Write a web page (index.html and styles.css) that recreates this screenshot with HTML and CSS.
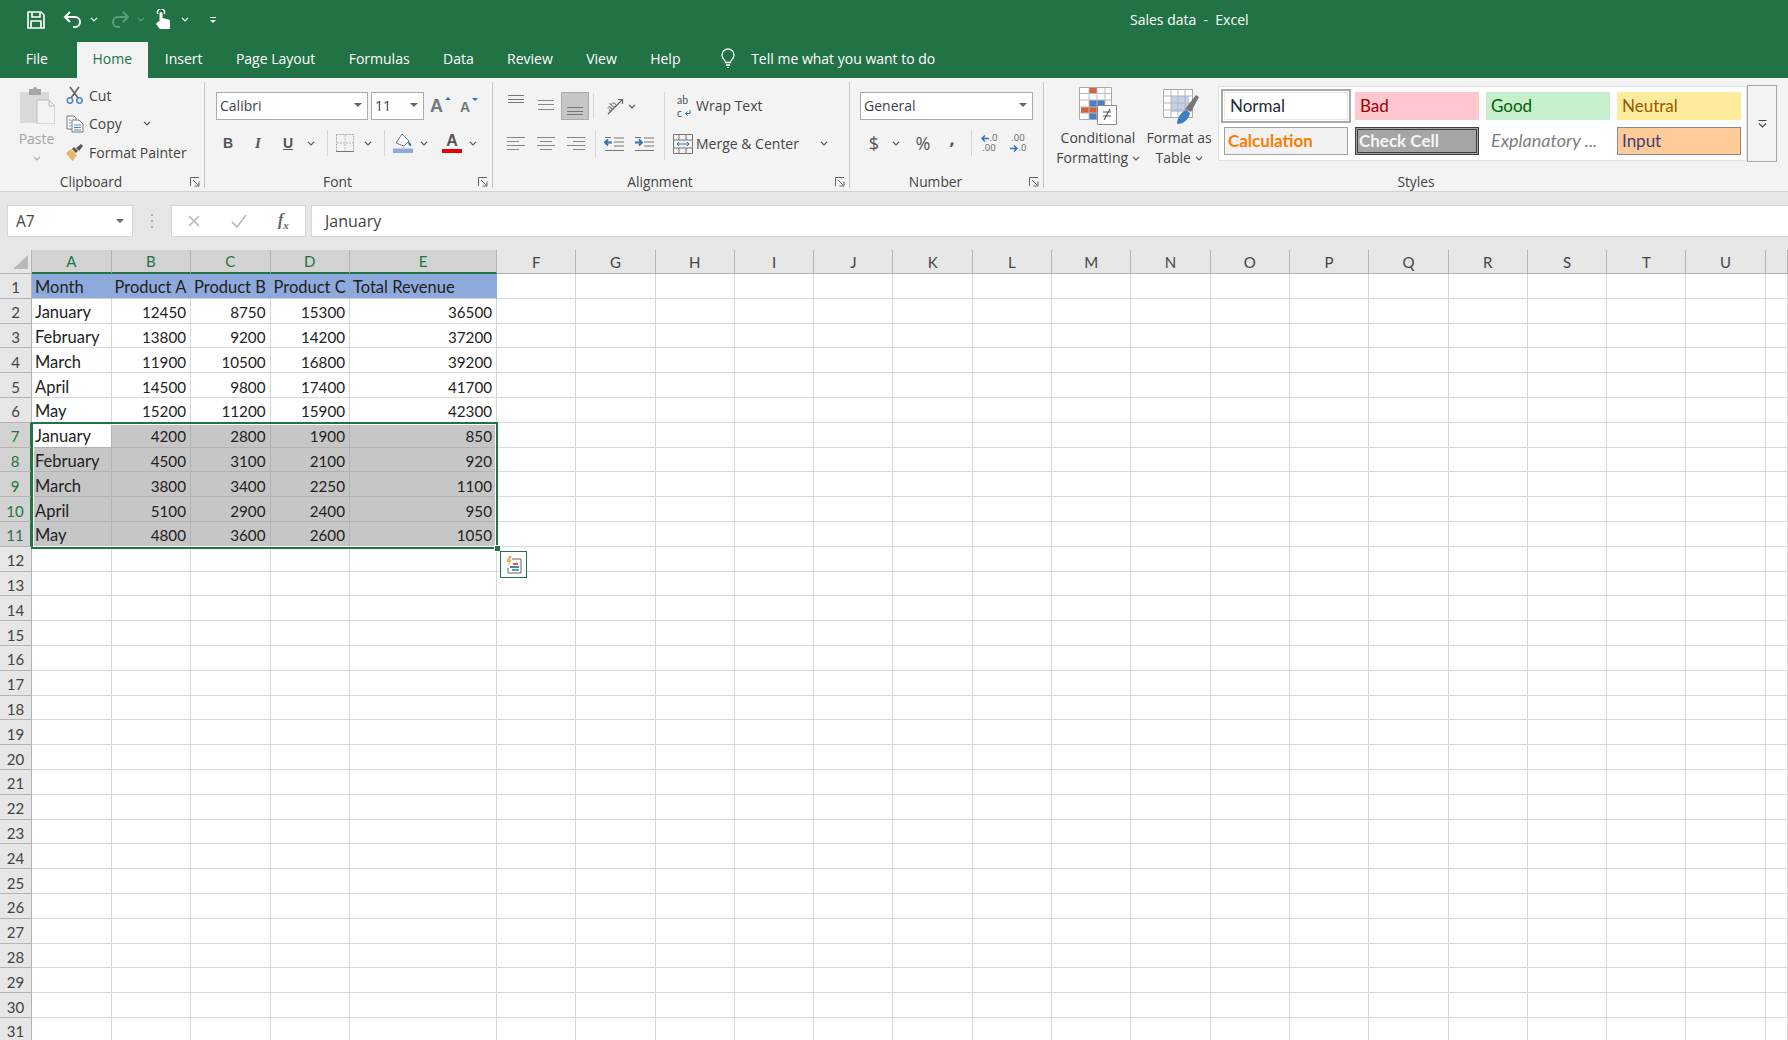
FILE: index.html
```html
<!DOCTYPE html>
<html lang="en">
<head>
    <meta charset="UTF-8">
    <title>Sales data - Excel</title>
    <link rel="stylesheet" href="styles.css">
</head>
<body>

    <svg class="defs" aria-hidden="true">
        <symbol id="chev" viewBox="0 0 8 5"><path d="M1 .8l3 3 3-3" fill="none" stroke="#555" stroke-width="1.2"/></symbol>
        <symbol id="launcher" viewBox="0 0 10 10"><path d="M.5 9V.5H9M3 3l5.5 5.5M4.5 9H9V4.5" fill="none" stroke="#666"/></symbol>
        <symbol id="al-top" viewBox="0 0 18 28"><path d="M1 3.500h16M1 7.500h16M1 10.500h16" stroke="#777" fill="none"/></symbol>
        <symbol id="al-mid" viewBox="0 0 18 28"><path d="M1 8.500h16M1 12.500h16M1 17.500h16" stroke="#888" fill="none"/></symbol>
        <symbol id="al-bot" viewBox="0 0 18 28"><path d="M1 15.500h16M1 19.500h16M1 22.500h16" stroke="#777" fill="none"/></symbol>
        <symbol id="al-left" viewBox="0 0 18 28"><path d="M0 7.500h18M0 11.500h12M0 15.500h18M0 19.500h12" stroke="#888" fill="none"/></symbol>
        <symbol id="al-center" viewBox="0 0 18 28"><path d="M0 7.500h18M3 11.500h12M0 15.500h18M3 19.500h12" stroke="#888" fill="none"/></symbol>
        <symbol id="al-right" viewBox="0 0 18 28"><path d="M0 7.500h18M6 11.500h12M0 15.500h18M6 19.500h12" stroke="#888" fill="none"/></symbol>
    </svg>

    <header class="titlebar">
        <div class="qat">
            <svg class="qat-save" viewBox="0 0 18 18"><path d="M1 1h13l3 3v13H1zM5 1v5h8V1M4 17v-7h10v7" fill="none" stroke="#fff" stroke-width="1.6"/></svg>
            <svg class="qat-undo" viewBox="0 0 20 17"><path d="M7 1L2 6l5 5M2 6h10a5 5 0 0 1 0 10h-2" fill="none" stroke="#fff" stroke-width="2"/></svg>
            <svg class="qat-chev" viewBox="0 0 8 5"><path d="M1 .8l3 3 3-3" fill="none" stroke="#fff" stroke-width="1.2"/></svg>
            <svg class="qat-redo" viewBox="0 0 20 17"><path d="M13 1l5 5-5 5M18 6H8a5 5 0 0 0 0 10h2" fill="none" stroke="#5f9c7c" stroke-width="2"/></svg>
            <svg class="qat-chev dim" viewBox="0 0 8 5"><path d="M1 .8l3 3 3-3" fill="none" stroke="#5f9c7c" stroke-width="1.2"/></svg>
            <svg class="qat-touch" viewBox="0 0 16 21"><path d="M3 5a3.500 3.500 0 1 1 6 0" fill="none" stroke="#fff" stroke-width="1.4"/><path d="M4.500 12V4.500a1.500 1.500 0 0 1 3 0V9l6 1.500c1 .3 1.500 1 1.500 2V20H5l-4-5 1-1.500z" fill="#fff"/></svg>
            <svg class="qat-chev" viewBox="0 0 8 5"><path d="M1 .8l3 3 3-3" fill="none" stroke="#fff" stroke-width="1.2"/></svg>
            <svg class="qat-more" viewBox="0 0 8 8"><path d="M1 1h6v1H1zM1 4h6L4 7z" fill="#fff"/></svg>
        </div>
        <div class="doc-title">Sales data&nbsp; - &nbsp;Excel</div>
    </header>

    <nav class="tabs">
        <span class="tab file">File</span>
        <span class="tab active">Home</span>
        <span class="tab">Insert</span>
        <span class="tab">Page Layout</span>
        <span class="tab">Formulas</span>
        <span class="tab">Data</span>
        <span class="tab">Review</span>
        <span class="tab">View</span>
        <span class="tab">Help</span>
        <svg class="bulb" viewBox="0 0 16 20"><path d="M5.500 14.500c0-2.500-3.500-3.500-3.500-7.500a6 6 0 0 1 12 0c0 4-3.500 5-3.500 7.500zM6 17h4M7 19.300h2" fill="none" stroke="#fff" stroke-width="1.3"/></svg>
        <span class="tell-me">Tell me what you want to do</span>
    </nav>

    <section class="ribbon">

        <div class="group clipboard">
            <div class="group-body clip-body">
                <div class="paste">
                    <svg class="paste-icon" viewBox="0 0 36 37"><path d="M1 5h29v31H1z" fill="#dcd8d8"/><path d="M10 2h4l1-2h2l1 2h4v6H10z" fill="#a8a6a6"/><path d="M18 13h12l6 6v18H18z" fill="#f5f1f5" stroke="#bbb"/><path d="M30 13v6h6" fill="none" stroke="#bbb"/></svg>
                    <span class="paste-label">Paste</span>
                    <svg class="chev" viewBox="0 0 8 5"><path d="M1 .8l3 3 3-3" fill="none" stroke="#aaa" stroke-width="1.2"/></svg>
                </div>
                <div class="clip-list">
                    <div class="clip-row">
                        <svg class="clip-icon" viewBox="0 0 18 18"><path d="M4 1l8 11M13 1L5 12" stroke="#666" stroke-width="1.700" fill="none"/><circle cx="4" cy="14.500" r="2.700" fill="none" stroke="#4a86c5" stroke-width="1.500"/><circle cx="13.500" cy="14.500" r="2.700" fill="none" stroke="#4a86c5" stroke-width="1.500"/></svg>
                        <span>Cut</span>
                    </div>
                    <div class="clip-row">
                        <svg class="clip-icon" viewBox="0 0 18 18"><path d="M1 1h7l2 2v11H1z" fill="#fff" stroke="#777"/><path d="M6 5h7l4 4v8H6z" fill="#fff" stroke="#777"/><path d="M3 5h2M3 8h2M3 11h2M8 10h7M8 12.500h7M8 15h7" stroke="#4a86c5"/></svg>
                        <span>Copy</span>
                        <svg class="chev copy-chev"><use href="#chev"/></svg>
                    </div>
                    <div class="clip-row">
                        <svg class="clip-icon" viewBox="0 0 18 18"><path d="M0 10l5-4 6 6-4 6c-2-1-5-5-7-8z" fill="#e8b868"/><path d="M6 6l2-2 4 4-2 2zM10 5l5-4 2 2-4 5z" fill="#555"/></svg>
                        <span>Format Painter</span>
                    </div>
                </div>
            </div>
            <div class="group-label">Clipboard</div>
            <svg class="launcher"><use href="#launcher"/></svg>
        </div>

        <div class="group font-group">
            <div class="group-body">
                <div class="tool-row">
                    <div class="combo font-name"><span>Calibri</span><i class="caret"></i></div>
                    <div class="combo font-size"><span>11</span><i class="caret"></i></div>
                    <div class="size-btn grow">A<i class="mini-up"></i></div>
                    <div class="size-btn shrink">A<i class="mini-down"></i></div>
                </div>
                <div class="tool-row second">
                    <span class="tool t30 fmt bold">B</span>
                    <span class="tool t30 fmt italic">I</span>
                    <span class="tool t30 fmt under">U</span>
                    <span class="tool t16"><svg class="chev"><use href="#chev"/></svg></span>
                    <i class="sep ml8 mr5"></i>
                    <span class="tool t24">
                        <svg class="icon-18" viewBox="0 0 18 18"><path d="M.5.500h17v17H.5z" fill="none" stroke="#aaa" stroke-dasharray="2 1"/><path d="M9 1v16M1 9h16" stroke="#bbb" stroke-dasharray="2 1"/><path d="M0 17.500h18" stroke="#777"/></svg>
                    </span>
                    <span class="tool t16 ml3"><svg class="chev"><use href="#chev"/></svg></span>
                    <i class="sep ml8 mr6"></i>
                    <span class="tool t24">
                        <svg class="icon-20" viewBox="0 0 20 20"><path d="M9 1l7 7-5 5-8-3z" fill="#fff" stroke="#777"/><path d="M15 8c3 2 4 4 3 5-2 0-3-2-3-5z" fill="#2f75b5"/><path d="M0 15.500h20V20H0z" fill="#8eaadb"/></svg>
                    </span>
                    <span class="tool t16 ml1"><svg class="chev"><use href="#chev"/></svg></span>
                    <span class="tool t24 ml8 color-a">A<i class="red-bar"></i></span>
                    <span class="tool t16 ml1"><svg class="chev"><use href="#chev"/></svg></span>
                </div>
            </div>
            <div class="group-label">Font</div>
            <svg class="launcher"><use href="#launcher"/></svg>
        </div>

        <div class="group align-group">
            <div class="group-body align-body">
                <div class="align-left">
                    <div class="tool-row">
                        <span class="tool t30"><svg class="icon-al"><use href="#al-top"/></svg></span>
                        <span class="tool t30"><svg class="icon-al"><use href="#al-mid"/></svg></span>
                        <span class="tool t30 pressed"><svg class="icon-al"><use href="#al-bot"/></svg></span>
                        <i class="sep ml4 mr10"></i>
                        <span class="tool t20">
                            <svg class="icon-20" viewBox="0 0 20 20"><text class="orient-text" x="2" y="13" transform="rotate(-45 8 10)">ab</text><path d="M4 18L18 4M14 3.500h4.500V8" fill="none" stroke="#666" stroke-width="1.200"/></svg>
                        </span>
                        <span class="tool t16"><svg class="chev"><use href="#chev"/></svg></span>
                    </div>
                    <div class="tool-row second">
                        <span class="tool t30"><svg class="icon-al"><use href="#al-left"/></svg></span>
                        <span class="tool t30"><svg class="icon-al"><use href="#al-center"/></svg></span>
                        <span class="tool t30"><svg class="icon-al"><use href="#al-right"/></svg></span>
                        <i class="sep ml4 mr3"></i>
                        <span class="tool t30">
                            <svg class="icon-20" viewBox="0 0 20 16"><path d="M10 2h10M10 6h10M10 10h10M1 14.500h19M1 1.500h6" stroke="#777" fill="none"/><path d="M8 6.500H1M4 3.500l-3 3 3 3" stroke="#2f75b5" stroke-width="1.800" fill="none"/></svg>
                        </span>
                        <span class="tool t30">
                            <svg class="icon-20" viewBox="0 0 20 16"><path d="M10 2h10M10 6h10M10 10h10M1 14.500h19M1 1.500h6" stroke="#777" fill="none"/><path d="M1 6.500h7M5 3.500l3 3-3 3" stroke="#2f75b5" stroke-width="1.800" fill="none"/></svg>
                        </span>
                    </div>
                </div>
                <div class="align-right">
                    <div class="wrap-row">
                        <svg class="wrap-icon" viewBox="0 0 20 28"><text class="wrap-text" x="1" y="12">ab</text><text class="wrap-text" x="1" y="25">c</text><path d="M14 18v3.500H9.500M11.500 19.500l-2 2 2 2" fill="none" stroke="#2f75b5"/></svg>
                        <span>Wrap Text</span>
                    </div>
                    <div class="merge-row">
                        <svg class="merge-icon" viewBox="0 0 20 20"><path d="M.5.500h19v19H.5zM1 6h18M1 14h18M6 1v5M13 1v5M6 14v5M13 14v5" fill="none" stroke="#777"/><path d="M4 10h12M6 8l-2 2 2 2M14 8l2 2-2 2" fill="none" stroke="#2f75b5"/></svg>
                        <span>Merge &amp; Center</span>
                        <svg class="chev merge-chev"><use href="#chev"/></svg>
                    </div>
                </div>
            </div>
            <div class="group-label">Alignment</div>
            <svg class="launcher"><use href="#launcher"/></svg>
        </div>

        <div class="group number-group">
            <div class="group-body">
                <div class="tool-row">
                    <div class="combo number-format"><span>General</span><i class="caret"></i></div>
                </div>
                <div class="tool-row second">
                    <span class="tool t28 num-sign">$</span>
                    <span class="tool t16"><svg class="chev"><use href="#chev"/></svg></span>
                    <span class="tool t28 ml5 num-sign">%</span>
                    <span class="tool t28 ml1 num-sign comma">,</span>
                    <i class="sep ml5 mr7"></i>
                    <span class="tool t20 decimal">
                        <span class="dec-line"><svg class="dec-arrow" viewBox="0 0 8 7"><path d="M8 3.500H1M4 .5l-3 3 3 3" fill="none" stroke="#2f75b5" stroke-width="1.500"/></svg>.0</span>
                        <span class="dec-line">.00</span>
                    </span>
                    <span class="tool t20 decimal ml9">
                        <span class="dec-line">.00</span>
                        <span class="dec-line"><svg class="dec-arrow" viewBox="0 0 8 7"><path d="M0 3.500h7M4 .5l3 3-3 3" fill="none" stroke="#2f75b5" stroke-width="1.500"/></svg>.0</span>
                    </span>
                </div>
            </div>
            <div class="group-label">Number</div>
            <svg class="launcher"><use href="#launcher"/></svg>
        </div>

        <div class="group styles-group">
            <div class="group-body styles-body">
                <div class="big-btn cond">
                    <svg class="big-icon" viewBox="0 0 38 38"><path d="M.5.500h32v32H.5z" fill="#fff" stroke="#aaa"/><path d="M10 1h8v6h-8z" fill="#d9603b"/><path d="M10 13h16v7H10z" fill="#4a7fc1"/><path d="M2 20h16v6H2z" fill="#d9603b"/><path d="M10 26h8v6h-8z" fill="#4a7fc1"/><path d="M10 1v31M18 1v31M26 1v31M1 6.500h31M1 13h31M1 20h31M1 26h31" stroke="#bbb" fill="none"/><path d="M18.500 18.500h19v19h-19z" fill="#fff" stroke="#888"/><path d="M24 25h8M24 29h8M31 22l-6 11" stroke="#555" fill="none" stroke-width="1.200"/></svg>
                    <span class="big-text">Conditional<br>Formatting <svg class="chev"><use href="#chev"/></svg></span>
                </div>
                <div class="big-btn fmt-table">
                    <svg class="big-icon table-icon" viewBox="0 0 36 36"><path d="M.5.500h29v28H.5z" fill="#fff" stroke="#aaa"/><path d="M8 7h18v16H8z" fill="#bfd0e8"/><path d="M8 1v28M15 1v28M22 1v28M1 7h28M1 14h28M1 21h28" stroke="#b5b5b5" fill="none"/><path d="M22 20L33 6l3 2-8 15z" fill="#777"/><path d="M14 35c0-6 4-12 9-14l4 3c-1 6-6 11-13 11z" fill="#3f7cbf"/></svg>
                    <span class="big-text">Format as<br>Table <svg class="chev"><use href="#chev"/></svg></span>
                </div>
                <div class="gallery">
                    <div class="style-cell s-normal">Normal</div>
                    <div class="style-cell s-bad">Bad</div>
                    <div class="style-cell s-good">Good</div>
                    <div class="style-cell s-neutral">Neutral</div>
                    <div class="style-cell s-calc">Calculation</div>
                    <div class="style-cell s-check">Check Cell</div>
                    <div class="style-cell s-expl">Explanatory ...</div>
                    <div class="style-cell s-input">Input</div>
                </div>
                <div class="gallery-more">
                    <svg viewBox="0 0 9 8"><path d="M.5.500h8" stroke="#444" fill="none"/><path d="M1 3.500l3.500 3.500L8 3.500" stroke="#444" stroke-width="1.200" fill="none"/></svg>
                </div>
            </div>
            <div class="group-label">Styles</div>
        </div>
    </section>

    <section class="formula-bar">
        <div class="name-box"><span>A7</span><i class="caret"></i></div>
        <div class="fb-grip"></div>
        <div class="fb-buttons">
            <svg class="fb-icon" viewBox="0 0 14 14"><path d="M2 2l10 10M12 2L2 12" stroke="#b5b5b5" stroke-width="1.500" fill="none"/></svg>
            <svg class="fb-icon" viewBox="0 0 16 14"><path d="M1 8l5 5L15 1" stroke="#b5b5b5" stroke-width="1.500" fill="none"/></svg>
            <span class="fx">f<sub>x</sub></span>
        </div>
        <div class="fb-input">January</div>
    </section>

    <main class="sheet">
        <div class="grid" id="grid"></div>
        <div class="selection"><i class="fill-handle"></i></div>
        <div class="quick-analysis">
            <svg viewBox="0 0 18 18"><path d="M4 0L1 6h3L2 11l6-7H5l2-4z" fill="#edb35c"/><path d="M7 3h9v14H3v-5" fill="#fff" stroke="#666"/><path d="M8 7h5v2H8z" fill="#d9603b"/><path d="M5 10h9v2H5z" fill="#4a7fc1"/><path d="M7 13h7v2H7z" fill="#55a985"/></svg>
        </div>
    </main>

    <script src="script.js"></script>

</body>
</html>
```

FILE: styles.css
```css
* {
    margin: 0;
    padding: 0;
    box-sizing: border-box;
}
html, body {
    height: 100%;
    overflow: hidden;
}
body {
    font-family: "Open Sans", "Noto Sans", sans-serif;
    font-size: 14px;
    color: #444;
    background: #fff;
}
.defs {
    position: absolute;
    width: 0;
    height: 0;
}
i {
    display: block;
}

/* title bar and tabs */
.titlebar {
    display: flex;
    align-items: center;
    height: 41px;
    padding: 0 0 2px 27px;
    background: #217346;
    color: #fff;
}
.qat {
    display: flex;
    align-items: center;
    width: 1103px;
}
.qat-save { width: 18px; height: 18px; margin-right: 18px; }
.qat-undo { width: 20px; height: 17px; margin-right: 7px; }
.qat-redo { width: 20px; height: 17px; margin: 0 7px 0 12px; }
.qat-chev { width: 8px; height: 5px; }
.qat-touch { width: 16px; height: 21px; margin: 0 10px 0 10px; }
.qat-more { width: 8px; height: 8px; margin-left: 20px; }
.doc-title {
    font-size: 14px;
}
.tabs {
    display: flex;
    align-items: center;
    height: 37px;
    background: #217346;
    color: #fff;
    padding-left: 9px;
}
.tab {
    display: flex;
    align-items: center;
    height: 36px;
    padding: 0 16.700px 3px;
    margin-bottom: -1px;
}
.tab.file {
    margin-right: 12px;
}
.tab.active {
    background: #f3f3f3;
    color: #217346;
    padding: 0 16px 3px;
}
.bulb {
    width: 16px;
    height: 20px;
    margin: 0 15px 3px 23px;
}
.tell-me {
    padding-bottom: 3px;
}

/* ribbon */
.ribbon {
    display: flex;
    height: 114px;
    background: #f3f3f3;
    border-bottom: 1px solid #d2d2d2;
}
.group {
    position: relative;
    display: flex;
    flex-direction: column;
    height: 106px;
    margin-top: 4px;
    border-right: 1px solid #c6c6c6;
}
.group-body {
    flex: 1;
    padding-top: 10px;
}
.group-label {
    height: 12px;
    padding-right: 22px;
    line-height: 12px;
    text-align: center;
    font-size: 13.800px;
    color: #444;
}
.styles-group .group-label {
    padding-right: 0;
}
.launcher {
    position: absolute;
    right: 4px;
    bottom: 1px;
    width: 10px;
    height: 10px;
}
.clipboard { width: 205px; }
.font-group { width: 288px; }
.font-group .group-body { padding-left: 8px; }
.align-group { width: 357px; }
.align-group .group-body { padding-left: 8px; }
.number-group { width: 194px; }
.number-group .group-body { padding-left: 10px; }
.styles-group { flex: 1; border-right: 0; }

.tool-row {
    display: flex;
    align-items: center;
    height: 28px;
}
.tool-row.second {
    margin-top: 10px;
}
.font-group .tool-row.second,
.number-group .tool-row.second {
    margin-top: 9px;
}
.tool {
    display: flex;
    align-items: center;
    justify-content: center;
    height: 28px;
    flex: none;
    color: #555;
}
.t16 { width: 16px; }
.t20 { width: 20px; }
.t24 { width: 24px; }
.t28 { width: 28px; }
.t30 { width: 30px; }
.ml1 { margin-left: 1px; }
.ml3 { margin-left: 3px; }
.ml4 { margin-left: 4px; }
.ml5 { margin-left: 5px; }
.ml8 { margin-left: 8px; }
.ml9 { margin-left: 9px; }
.mr3 { margin-right: 3px; }
.mr5 { margin-right: 5px; }
.mr6 { margin-right: 6px; }
.mr7 { margin-right: 7px; }
.mr10 { margin-right: 10px; }
.sep {
    width: 1px;
    height: 26px;
    background: #d6d6d6;
    flex: none;
}
.chev {
    width: 8px;
    height: 5px;
}
.icon-18 { width: 18px; height: 18px; }
.icon-20 { width: 20px; height: 20px; }
.icon-al { width: 18px; height: 28px; }
.caret {
    width: 0;
    height: 0;
    border-left: 4px solid transparent;
    border-right: 4px solid transparent;
    border-top: 4px solid #666;
}
.combo {
    display: flex;
    align-items: center;
    justify-content: space-between;
    height: 28px;
    background: #fff;
    border: 1px solid #ababab;
    padding: 0 5px 2px 3px;
    color: #3a3f4a;
}

/* clipboard */
.clip-body {
    display: flex;
    padding-top: 0;
}
.paste {
    display: flex;
    flex-direction: column;
    align-items: center;
    width: 66px;
    padding: 5px 0 0 7px;
    color: #a4a4a4;
}
.paste-icon { width: 36px; height: 37px; }
.paste-label { margin-top: 5px; line-height: 20px; }
.paste .chev { margin-top: 7px; }
.clip-list {
    margin-top: -1px;
}
.clip-row {
    display: flex;
    align-items: center;
    height: 28.5px;
}
.clip-icon {
    width: 18px;
    height: 18px;
    margin-right: 5px;
}
.copy-chev {
    margin-left: 21px;
}

/* font */
.font-name {
    width: 152px;
    margin-left: 3px;
}
.font-size {
    width: 53px;
    margin-left: 3px;
}
.size-btn {
    position: relative;
    flex: none;
    font-family: "Liberation Sans", sans-serif;
    color: #777;
    font-weight: bold;
}
.size-btn.grow { font-size: 18px; margin-left: 6px; width: 21px; }
.size-btn.shrink { font-size: 14px; margin-left: 9px; width: 18px; padding-top: 2px; }
.mini-up, .mini-down {
    position: absolute;
    top: 1px;
    right: 0;
    width: 0;
    height: 0;
    border-left: 3px solid transparent;
    border-right: 3px solid transparent;
}
.mini-up { border-bottom: 3px solid #2f75b5; }
.mini-down { border-top: 3px solid #2f75b5; }
.fmt {
    font-family: "Liberation Sans", sans-serif;
    font-size: 14px;
    font-weight: bold;
}
.fmt.italic { font-family: "Liberation Serif", serif; font-style: italic; font-size: 15px; }
.fmt.under { text-decoration: underline; }
.color-a {
    position: relative;
    font-family: "Liberation Sans", sans-serif;
    font-size: 16px;
    font-weight: bold;
    padding-bottom: 4px;
}
.red-bar {
    position: absolute;
    left: 2px;
    right: 2px;
    bottom: 4px;
    height: 4px;
    background: #e60000;
}

/* alignment */
.align-body {
    display: flex;
}
.align-left {
    width: 163px;
}
.pressed {
    background: #c6c6c6;
    border: 1px solid #ababab;
    width: 28px;
}
.orient-text {
    font-size: 9px;
    fill: #666;
}
.align-right {
    height: 68px;
    border-left: 1px solid #d6d6d6;
    padding-left: 8px;
}
.wrap-row, .merge-row {
    display: flex;
    align-items: center;
    height: 28px;
    padding-bottom: 2px;
}
.merge-row {
    margin-top: 10px;
}
.wrap-icon {
    width: 20px;
    height: 28px;
    margin: 2px 0 0 3px;
    flex: none;
}
.wrap-text {
    font-family: "Lato", sans-serif;
    font-size: 10.500px;
    fill: #555;
}
.merge-icon {
    width: 20px;
    height: 20px;
    margin: 2px 3px 0 0;
}
.merge-chev {
    margin-left: 21px;
}

/* number */
.number-format {
    width: 173px;
}
.num-sign {
    font-size: 18px;
}
.comma {
    font-weight: bold;
    padding-bottom: 10px;
}
.decimal {
    flex-direction: column;
    font-size: 9.500px;
    line-height: 10px;
    color: #666;
}
.dec-line {
    display: flex;
    align-items: center;
    white-space: nowrap;
}
.dec-arrow {
    width: 8px;
    height: 7px;
    margin-right: 1px;
}

/* styles */
.styles-body {
    display: flex;
    padding: 0;
}
.big-btn {
    display: flex;
    flex-direction: column;
    align-items: center;
    padding-top: 5px;
}
.big-btn.cond { width: 96px; padding-left: 12px; }
.big-btn.fmt-table { width: 78px; }
.big-icon {
    width: 38px;
    height: 38px;
}
.table-icon {
    width: 36px;
    height: 36px;
    margin: 2px 0 0 4px;
}
.big-text {
    margin-top: 3px;
    line-height: 20px;
    text-align: center;
    white-space: nowrap;
}
.big-text .chev {
    vertical-align: 2px;
}
.gallery {
    display: grid;
    grid-template-columns: repeat(4, 124px);
    grid-template-rows: 28px 28px;
    gap: 7px;
    width: 529px;
    height: 75px;
    margin-top: 4px;
    padding: 5px 0 0 5px;
    background: #fff;
    border: 1px solid #e1e1e1;
}
.style-cell {
    display: flex;
    align-items: center;
    padding: 0 0 2px 5px;
    font-family: "Lato", sans-serif;
    font-size: 17px;
    white-space: nowrap;
}
.s-normal { color: #1f2937; outline: 2px solid #a9a9a9; outline-offset: 1px; border: 1px solid #e8e8e8; }
.s-bad { background: #ffc7ce; color: #9c0006; }
.s-good { background: #c6efce; color: #006100; }
.s-neutral { background: #ffeb9c; color: #9c5700; }
.s-calc { background: #f2f2f2; color: #fa7d00; font-weight: bold; border: 1px solid #a0a0a0; padding-left: 3px; }
.s-check { background: #a5a5a5; color: #f4f4f4; font-weight: bold; border: 3px double #3f3f3f; padding-left: 1px; }
.s-expl { color: #7f7f7f; font-style: italic; font-size: 18px; }
.s-input { background: #ffcc99; color: #3f3f76; border: 1px solid #8a8a8a; padding-left: 4px; }
.gallery-more {
    display: flex;
    align-items: center;
    justify-content: center;
    width: 30px;
    height: 77px;
    margin-top: 3px;
    border: 1px solid #a6a6a6;
}
.gallery-more svg {
    width: 9px;
    height: 8px;
}

/* formula bar */
.formula-bar {
    display: flex;
    height: 58px;
    padding: 13px 0 13px 7px;
    background: #e6e6e6;
}
.name-box {
    display: flex;
    align-items: center;
    justify-content: space-between;
    width: 126px;
    padding: 0 8px;
    background: #fff;
    border: 1px solid #d6d6d6;
    font-size: 15.500px;
}
.fb-grip {
    width: 2px;
    height: 14px;
    margin: 9px 18px 0 18px;
    background: repeating-linear-gradient(#aaa 0 2px, transparent 2px 6px);
}
.fb-buttons {
    display: flex;
    align-items: center;
    width: 135px;
    padding-left: 15px;
    background: #fff;
    border: 1px solid #d6d6d6;
}
.fb-icon {
    width: 14px;
    height: 14px;
    margin-right: 30px;
}
.fb-icon + .fb-icon {
    width: 16px;
    margin-right: 31px;
}
.fx {
    font-family: "Liberation Serif", serif;
    font-style: italic;
    font-weight: bold;
    font-size: 16px;
    color: #666;
}
.fx sub {
    font-size: 11px;
}
.fb-input {
    display: flex;
    align-items: center;
    flex: 1;
    margin-left: 5px;
    padding-left: 13px;
    background: #fff;
    border: 1px solid #d6d6d6;
    border-right: 0;
    font-size: 16px;
}

/* sheet */
.sheet {
    position: relative;
}
.grid {
    display: grid;
    grid-template-columns: 32px repeat(4, 79.5px) 147px repeat(16, 79.3px) 1fr;
    grid-template-rows: 24px repeat(31, 24.8px);
    font-family: "Lato", sans-serif;
    font-size: 16.500px;
    color: #222;
}
.cell {
    display: flex;
    align-items: center;
    padding: 3px 3px 0 3px;
    border-right: 1px solid #d8d8d8;
    border-bottom: 1px solid #d8d8d8;
    white-space: nowrap;
}
.cell.num {
    justify-content: flex-end;
    padding-right: 4px;
    font-size: 15.200px;
}
.cell.title {
    background: #8ea9db;
    border-right-color: #8ea9db;
    border-bottom-color: #d4d4d4;
}
.cell.selected {
    background: #c6c6c6;
    border-color: #b2b2b2;
}
.cell.active {
    background: #fff;
}
.col-head, .row-head {
    justify-content: center;
    padding: 0;
    font-size: 15px;
    background: #e6e6e6;
    color: #444;
    border-right: 1px solid #b4b4b4;
    border-bottom: 1px solid #b4b4b4;
}
.row-head {
    padding-top: 3px;
}
.col-head.on, .row-head.on {
    background: #d2d2d2;
    color: #217346;
}
.col-head.on {
    border-bottom: 2px solid #217346;
}
.row-head.on {
    border-right: 2px solid #217346;
}
.corner {
    position: relative;
    background: #e6e6e6;
    border-right: 1px solid #b4b4b4;
    border-bottom: 1px solid #b4b4b4;
}
.corner::after {
    content: "";
    position: absolute;
    right: 3px;
    bottom: 4px;
    border-left: 15px solid transparent;
    border-bottom: 14px solid #b8b8b8;
}
.selection {
    position: absolute;
    left: 31px;
    top: 172px;
    width: 467px;
    height: 127px;
    border: 2px solid #217346;
    box-shadow: inset 0 0 0 1px #fff;
}
.fill-handle {
    position: absolute;
    right: -5px;
    bottom: -5px;
    width: 7px;
    height: 7px;
    background: #217346;
    border: 1px solid #fff;
}
.quick-analysis {
    position: absolute;
    left: 500px;
    top: 301px;
    width: 27px;
    height: 27px;
    padding: 4px;
    background: #fff;
    border: 1px solid #217346;
}
.quick-analysis svg {
    display: block;
    width: 18px;
    height: 18px;
}
```

FILE: script.js
```js
// sheet contents, the rest of the grid is empty
var rows = [
    ["Month", "Product A", "Product B", "Product C", "Total Revenue"],
    ["January", 12450, 8750, 15300, 36500],
    ["February", 13800, 9200, 14200, 37200],
    ["March", 11900, 10500, 16800, 39200],
    ["April", 14500, 9800, 17400, 41700],
    ["May", 15200, 11200, 15900, 42300],
    ["January", 4200, 2800, 1900, 850],
    ["February", 4500, 3100, 2100, 920],
    ["March", 3800, 3400, 2250, 1100],
    ["April", 5100, 2900, 2400, 950],
    ["May", 4800, 3600, 2600, 1050]
];
var letters = "ABCDEFGHIJKLMNOPQRSTU".split("");
letters.push("");

var grid = document.getElementById("grid");

function addCell(className, text) {
    var cell = document.createElement("div");
    cell.className = "cell " + className;
    cell.textContent = text;
    grid.appendChild(cell);
}

var corner = document.createElement("div");
corner.className = "corner";
grid.appendChild(corner);

letters.forEach(function (letter, c) {
    addCell(c < 5 ? "col-head on" : "col-head", letter);
});

for (var r = 0; r < 31; r++) {
    var selectedRow = r >= 6 && r <= 10;
    addCell(selectedRow ? "row-head on" : "row-head", r + 1);

    for (var c = 0; c < letters.length; c++) {
        var value = rows[r] && rows[r][c] !== undefined ? rows[r][c] : "";
        var cls = typeof value === "number" ? "num" : "";
        if (r === 0 && c < 5) cls += " title";
        if (selectedRow && c < 5) cls += " selected";
        if (r === 6 && c === 0) cls += " active";
        addCell(cls, value);
    }
}
```
